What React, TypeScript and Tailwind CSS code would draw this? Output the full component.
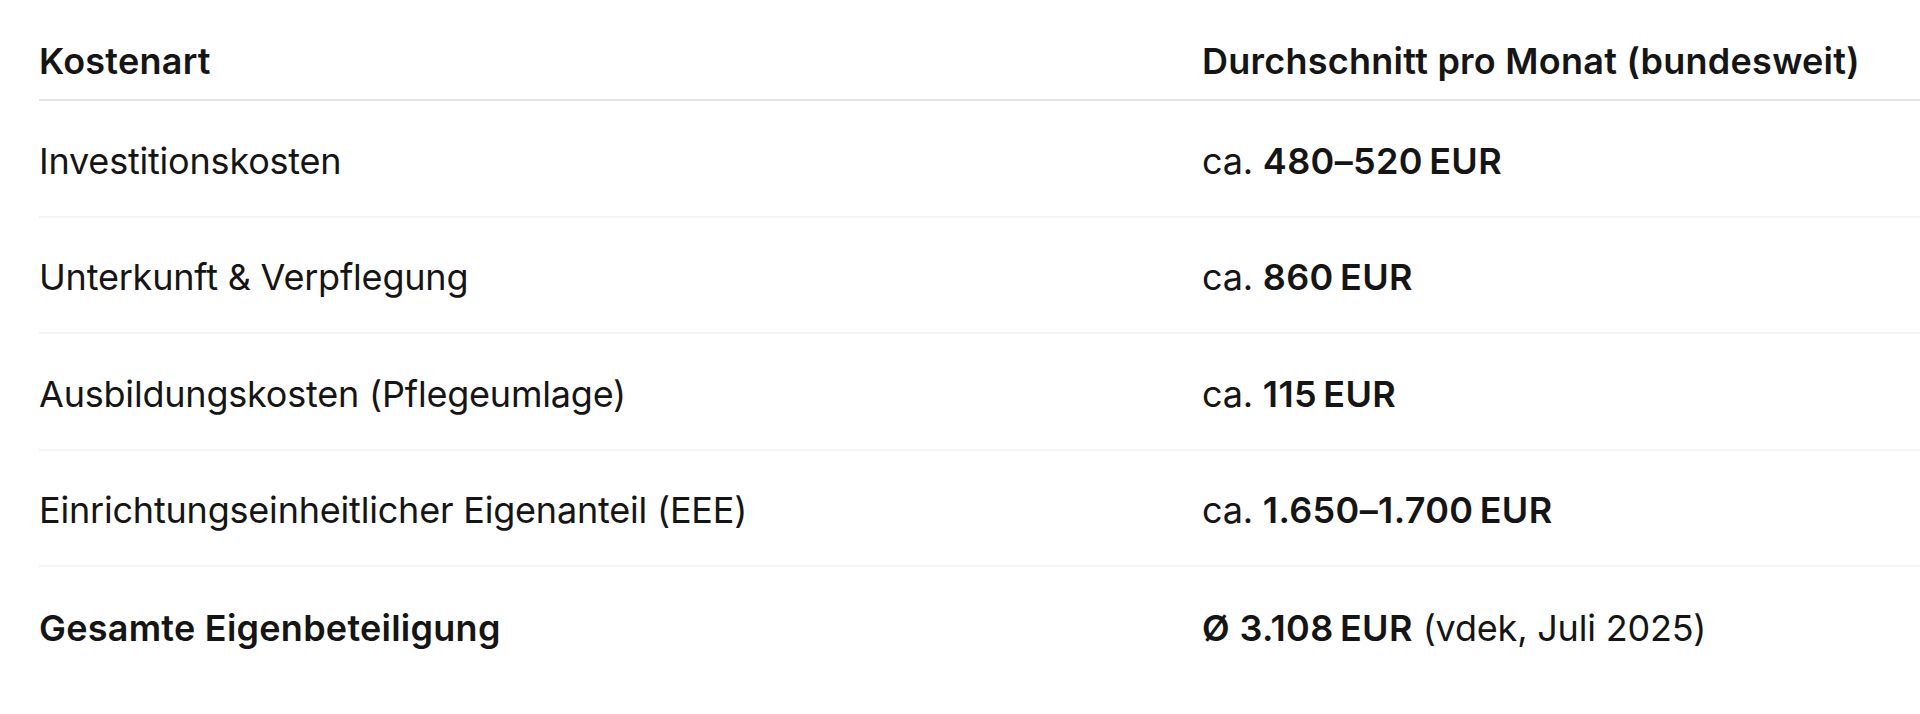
export default function App() {
  const rows: { label: string; value: string }[] = [
    { label: "Investitionskosten", value: "480–520\u202FEUR" },
    { label: "Unterkunft & Verpflegung", value: "860\u202FEUR" },
    { label: "Ausbildungskosten (Pflegeumlage)", value: "115\u202FEUR" },
    { label: "Einrichtungseinheitlicher Eigenanteil (EEE)", value: "1.650–1.700\u202FEUR" },
  ];

  return (
    <div
      className="min-h-screen bg-white pl-[39px] overflow-hidden text-[36px] text-[#151515] tracking-[-0.2px]"
      style={{ fontFamily: "Inter, 'Noto Sans', sans-serif" }}
    >
      <div className="w-[1881px]">
        <div className="grid grid-cols-[1163px_1fr] h-[101px] pt-[39px] border-b-2 border-[#e4e4e4] font-semibold tracking-[0.25px] leading-[44px]">
          <div>Kostenart</div>
          <div>Durchschnitt pro Monat (bundesweit)</div>
        </div>

        {rows.map((row) => (
          <div
            key={row.label}
            className="grid grid-cols-[1163px_1fr] h-[116.5px] pt-[5px] items-center border-b-2 border-[#f4f4f4] leading-[44px]"
          >
            <div>{row.label}</div>
            <div>
              ca. <span className="font-semibold tracking-[0.35px]">{row.value}</span>
            </div>
          </div>
        ))}

        <div className="grid grid-cols-[1163px_1fr] h-[117px] pt-[5px] items-center leading-[44px]">
          <div className="font-semibold tracking-[0.25px]">Gesamte Eigenbeteiligung</div>
          <div>
            <span className="font-semibold tracking-[0.35px]">Ø 3.108{"\u202F"}EUR</span> (vdek, Juli 2025)
          </div>
        </div>
      </div>
    </div>
  );
}
